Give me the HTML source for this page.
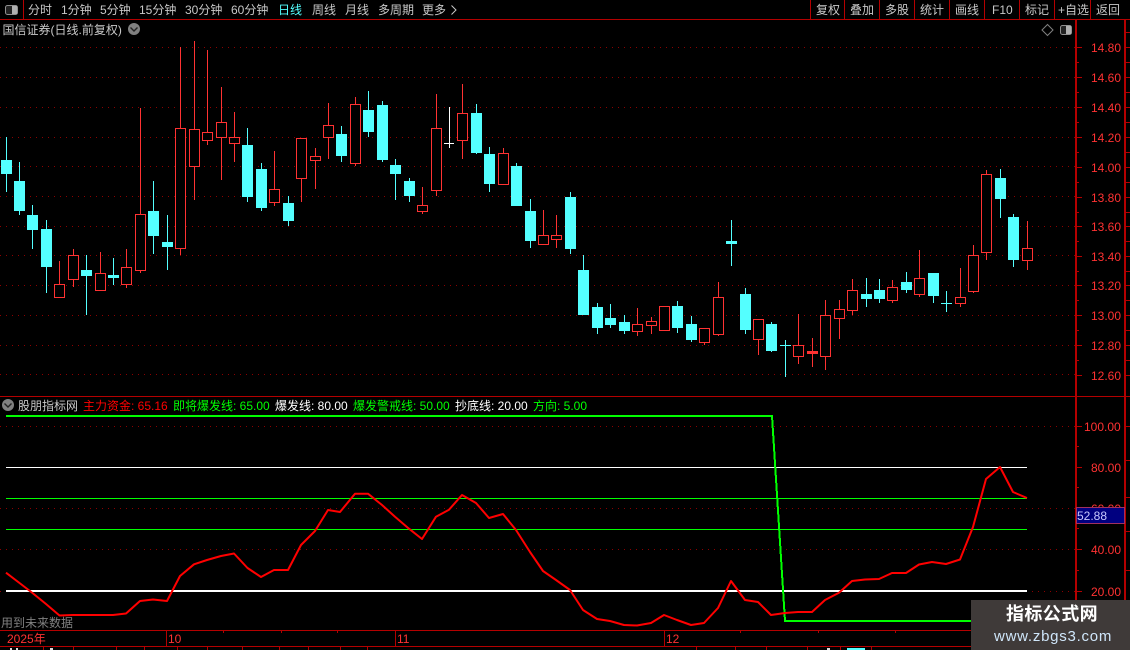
<!DOCTYPE html>
<html><head><meta charset="utf-8">
<style>
html,body{margin:0;padding:0;background:#000;width:1130px;height:650px;overflow:hidden}
svg{display:block;position:absolute;left:0;top:0}
text{font-family:"Liberation Sans","Noto Sans CJK SC",sans-serif;font-size:12px}
.t{fill:#c8c8c8}.a{fill:#ff3232}
</style></head><body>
<svg width="1130" height="650" viewBox="0 0 1130 650">
<!-- dotted grid -->
<path d="M0 47.5H1076M0 77.5H1076M0 107.5H1076M0 137.5H1076M0 166.5H1076M0 196.5H1076M0 226.5H1076M0 255.5H1076M0 285.5H1076M0 315.5H1076M0 345.5H1076M0 374.5H1076M0 426.5H1076M0 508.5H1076M0 549.5H1076M0 591.5H1076" stroke="#8c0000" stroke-width="1" stroke-dasharray="1 5" fill="none" shape-rendering="crispEdges"/>
<!-- frame -->
<path d="M0 19.5H1130M0 396.5H1130M0 630.5H1130M0 646.5H1130M23.5 0V19M810.5 0V19M844.5 0V19M879.5 0V19M914.5 0V19M949.5 0V19M984.5 0V19M1019.5 0V19M1054.5 0V19M1090.5 0V19M166.5 630V646M395.5 630V646M664.5 630V646M223.5 630V633M281.5 630V633M337.5 630V633M740.5 630V633M818.5 630V633M895.5 630V633M43.5 646V650M73.5 646V650M116.5 646V650M144.5 646V650M177.5 646V650M207.5 646V650M242.5 646V650M279.5 646V650M308.5 646V650M340.5 646V650M367.5 646V650M696.5 646V650M735.5 646V650M766.5 646V650M807.5 646V650M840.5 646V650M871.5 646V650" stroke="#b40000" stroke-width="1" fill="none" shape-rendering="crispEdges"/>
<path d="M1076 19V630M1125 19V630" stroke="#b40000" stroke-width="2" fill="none" shape-rendering="crispEdges"/>
<path d="M1076 47.5h6M1076 77.5h6M1076 107.5h6M1076 137.5h6M1076 167.5h6M1076 197.5h6M1076 226.5h6M1076 256.5h6M1076 285.5h6M1076 315.5h6M1076 345.5h6M1076 375.5h6M1076 62.5h3M1076 92.5h3M1076 122.5h3M1076 152.5h3M1076 182.5h3M1076 212.5h3M1076 241.5h3M1076 271.5h3M1076 300.5h3M1076 330.5h3M1076 360.5h3M1076 426.5h6M1076 467.5h6M1076 508.5h6M1076 549.5h6M1076 591.5h6M1076 446.5h3M1076 487.5h3M1076 528.5h3M1076 570.5h3M1126 32.5h4M1126 47.5h4M1126 62.5h4M1126 77.5h4M1126 92.5h4M1126 107.5h4M1126 122.5h4M1126 137.5h4M1126 152.5h4M1126 167.5h4M1126 182.5h4M1126 197.5h4M1126 212.5h4M1126 226.5h4M1126 241.5h4M1126 256.5h4M1126 271.5h4M1126 285.5h4M1126 300.5h4M1126 315.5h4M1126 330.5h4M1126 345.5h4M1126 360.5h4M1126 375.5h4M1126 426.5h4M1126 460.5h4M1126 497.5h4M1126 531.5h4M1126 570.5h4" stroke="#b40000" stroke-width="1" fill="none" shape-rendering="crispEdges"/>

<!-- candles: cyan -->
<path stroke="#54ffff" fill="none" shape-rendering="crispEdges" d="M6.5 137V192M19.5 162V215M32.5 205V249M46.5 220V293M86.5 255V315M113.5 258V285M153.5 181V254M167.5 215V270M247.5 128V202M261.5 163V211M288.5 196V226M341.5 126V162M368.5 91V137M382.5 101V162M395.5 159V200M409.5 178V202M476.5 104V154M489.5 147V192M516.5 163V206M530.5 199V248M570.5 192V254M583.5 255V315M597.5 303V334M610.5 304V328M624.5 315V334M677.5 301V333M691.5 316V342M731.5 220V266M745.5 288V334M771.5 322V352M866.5 278V307M879.5 279V303M906.5 272V293M933.5 273V303M1000.5 169V218M1013.5 214V267M785.5 340V377M780 345.5H791M946.5 291V312M941 303.5H952"/>
<path fill="#54ffff" shape-rendering="crispEdges" d="M1 160h11V174H1zM14 181h11V211H14zM27 215h11V230H27zM41 229h11V267H41zM81 270h11V276H81zM108 275h11V278H108zM148 211h11V236H148zM162 242h11V247H162zM242 145h11V197H242zM256 169h11V208H256zM283 203h11V221H283zM336 134h11V156H336zM363 110h11V132H363zM377 105h11V160H377zM390 165h11V174H390zM404 181h11V196H404zM471 113h11V153H471zM484 154h11V184H484zM511 166h11V206H511zM525 211h11V241H525zM565 197h11V249H565zM578 270h11V315H578zM592 307h11V328H592zM605 318h11V325H605zM619 322h11V331H619zM672 306h11V328H672zM686 324h11V340H686zM726 241h11V244H726zM740 294h11V330H740zM766 324h11V351H766zM861 294h11V299H861zM874 290h11V299H874zM901 282h11V290H901zM928 273h11V296H928zM995 178h11V199H995zM1008 217h11V260H1008z"/>
<!-- white doji -->
<path stroke="#fff" fill="none" shape-rendering="crispEdges" d="M449.5 107V148M444 143.5H454"/>
<!-- candles: red -->
<path stroke="#ff3232" fill="none" shape-rendering="crispEdges" d="M59.5 261V298M73.5 249V287M100.5 252V291M126.5 249V288M140.5 108V273M180.5 47V255M194.5 41V200M207.5 50V145M221.5 87V180M234.5 112V162M274.5 151V206M301.5 138V202M315.5 148V189M328.5 103V159M355.5 97V166M422.5 187V214M436.5 94V196M462.5 84V159M503.5 148V185M543.5 210V245M556.5 215V248M637.5 308V336M651.5 317V334M704.5 328V345M718.5 282V336M758.5 319V355M798.5 314V364M812.5 338V367M825.5 300V370M839.5 300V339M852.5 279V315M892.5 280V303M919.5 250V297M960.5 268V307M973.5 245V293M986.5 170V260M1027.5 221V270"/>
<path fill="#000" stroke="#ff3232" shape-rendering="crispEdges" d="M54.5 284.5h10V297.5h-10zM68.5 255.5h10V279.5h-10zM95.5 273.5h10V290.5h-10zM121.5 267.5h10V284.5h-10zM135.5 214.5h10V270.5h-10zM175.5 128.5h10V248.5h-10zM189.5 129.5h10V166.5h-10zM202.5 132.5h10V140.5h-10zM216.5 122.5h10V137.5h-10zM229.5 137.5h10V143.5h-10zM269.5 189.5h10V202.5h-10zM296.5 138.5h10V178.5h-10zM310.5 156.5h10V160.5h-10zM323.5 125.5h10V137.5h-10zM350.5 104.5h10V163.5h-10zM417.5 205.5h10V211.5h-10zM431.5 128.5h10V190.5h-10zM457.5 113.5h10V140.5h-10zM498.5 153.5h10V184.5h-10zM538.5 235.5h10V244.5h-10zM551.5 235.5h10V239.5h-10zM632.5 324.5h10V331.5h-10zM646.5 321.5h10V325.5h-10zM659.5 306.5h10V330.5h-10zM699.5 328.5h10V342.5h-10zM713.5 297.5h10V334.5h-10zM753.5 319.5h10V339.5h-10zM793.5 345.5h10V356.5h-10zM820.5 315.5h10V356.5h-10zM834.5 309.5h10V318.5h-10zM847.5 290.5h10V310.5h-10zM887.5 287.5h10V300.5h-10zM914.5 278.5h10V294.5h-10zM955.5 297.5h10V303.5h-10zM968.5 255.5h10V291.5h-10zM981.5 174.5h10V252.5h-10zM1022.5 248.5h10V260.5h-10z"/>
<rect x="807" y="351" width="11" height="3" fill="#ff3232"/>

<!-- indicator lines -->
<path d="M6 467.5H1027" fill="none" stroke="#fff" shape-rendering="crispEdges"/>
<path d="M6 498.5H1027M6 529.5H1027" fill="none" stroke="#00ff00" shape-rendering="crispEdges"/>
<rect x="6" y="590" width="1021" height="2" fill="#fff"/>
<path d="M6 416H772L785 621H1027" fill="none" stroke="#00ff00" stroke-width="2" shape-rendering="crispEdges"/>
<path d="M6 572.7L19.5 583L32.5 593L46 604L59.5 615.5L73 615L86 615L100 615L113 615L126 613.5L140 601L153 599.5L167 601L180 576L194 564.3L207 560L221 556L234 553.5L247.5 568L261 577L274 570L288 570L301 545L315 531L328 510L340 512L355 493.7L368 493.7L382 505L395 516.7L409 528.7L422 539L436 516.7L449 509.7L462 495L476 503L489 518L503 514L516 530L530 552L543 571L556 580L570 590L583 610L597 619L610 621L624 625L637 625.5L651 623L664 615L677 620L691 625L704 623L718 608L731 581L745 600L758 602L771 615L785 613L798 612L812 612L825 600L839 592.7L852 581L865 579.5L879 579L892 573L906 573L919 564.5L932 562L946 564L960 559.5L973 527L986 479L1000 467L1013 492L1027 498" fill="none" stroke="#ff0000" stroke-width="2" stroke-linejoin="round"/>

<!-- toolbar left -->
<rect x="5.5" y="5.5" width="12" height="9" rx="2" fill="#222" stroke="#909090"/><rect x="12" y="6" width="5" height="8" fill="#b0b0b0"/>
<text class="t" x="28" y="14">分时</text>
<text class="t" x="61" y="14">1分钟</text>
<text class="t" x="100" y="14">5分钟</text>
<text class="t" x="139" y="14">15分钟</text>
<text class="t" x="185" y="14">30分钟</text>
<text class="t" x="231" y="14">60分钟</text>
<text x="278" y="14" style="fill:#54ffff">日线</text>
<text class="t" x="312" y="14">周线</text>
<text class="t" x="345" y="14">月线</text>
<text class="t" x="378" y="14">多周期</text>
<text class="t" x="422" y="14">更多</text>
<path d="M451.5 5.5L456 10L451.5 14.5" fill="none" stroke="#c8c8c8"/>
<!-- toolbar right -->
<text class="t" x="816" y="14">复权</text>
<text class="t" x="850" y="14">叠加</text>
<text class="t" x="885" y="14">多股</text>
<text class="t" x="920" y="14">统计</text>
<text class="t" x="955" y="14">画线</text>
<text class="t" x="992" y="14">F10</text>
<text class="t" x="1025" y="14">标记</text>
<text class="t" x="1058" y="14">+自选</text>
<text class="t" x="1096" y="14">返回</text>
<!-- title -->
<text class="t" x="2.5" y="34">国信证券(日线.前复权)</text>
<circle cx="134" cy="29" r="6" fill="#808080"/><path d="M130.5 27.5L134 31L137.5 27.5" fill="none" stroke="#222" stroke-width="1.4"/>
<path d="M1047.5 24.5L1053 30L1047.5 35.5L1042 30Z" fill="none" stroke="#808080"/>
<rect x="1060.5" y="25.5" width="11" height="9" rx="2" fill="#222" stroke="#909090"/><rect x="1066" y="26" width="5" height="8" fill="#b0b0b0"/>
<!-- axis upper -->
<text class="a" x="1091" y="52">14.80</text><text class="a" x="1091" y="82">14.60</text><text class="a" x="1091" y="112">14.40</text><text class="a" x="1091" y="142">14.20</text><text class="a" x="1091" y="172">14.00</text><text class="a" x="1091" y="202">13.80</text><text class="a" x="1091" y="231">13.60</text><text class="a" x="1091" y="261">13.40</text><text class="a" x="1091" y="290">13.20</text><text class="a" x="1091" y="320">13.00</text><text class="a" x="1091" y="350">12.80</text><text class="a" x="1091" y="380">12.60</text>
<!-- indicator labels -->
<circle cx="8" cy="405" r="6" fill="#808080"/><path d="M4.5 403.5L8 407L11.5 403.5" fill="none" stroke="#222" stroke-width="1.4"/>
<text class="t" x="18" y="410">股朋指标网</text>
<text x="83" y="410" fill="#ff0000">主力资金: 65.16</text>
<text x="173" y="410" fill="#00ff00">即将爆发线: 65.00</text>
<text x="275" y="410" fill="#fff">爆发线: 80.00</text>
<text x="353" y="410" fill="#00ff00">爆发警戒线: 50.00</text>
<text x="455" y="410" fill="#fff">抄底线: 20.00</text>
<text x="533" y="410" fill="#00ff00">方向: 5.00</text>
<!-- axis lower -->
<text class="a" x="1084" y="431">100.00</text><text class="a" x="1091" y="472">80.00</text><text class="a" x="1091" y="513">60.00</text><text class="a" x="1091" y="554">40.00</text><text class="a" x="1091" y="596">20.00</text>
<rect x="1076.5" y="507.5" width="48" height="16" fill="#000080" stroke="#a03060"/>
<text x="1077" y="520" fill="#c8c8ff">52.88</text>
<text x="1" y="627" fill="#808080">用到未来数据</text>
<!-- time axis -->
<text class="a" x="7" y="643">2025年</text>
<text class="a" x="168" y="643">10</text>
<text class="a" x="397" y="643">11</text>
<text class="a" x="666" y="643">12</text>
<path d="M10 648h2v2h-2zM16 648h2v2h-2zM50 648h3v2h-3zM827 648h3v2h-3z" fill="#ddd"/>
<path d="M847 648h18v2h-18z" fill="#54ffff"/>
<!-- watermark -->
<rect x="971" y="600" width="159" height="50" fill="#3f3a39"/>
<text x="1006" y="620" style="font-size:18px;font-weight:700;letter-spacing:.4px" fill="#fff">指标公式网</text>
<text x="994" y="641" style="font-size:15px;letter-spacing:.75px" fill="#cfe6fa">www.zbgs3.com</text>
</svg>
</body></html>
